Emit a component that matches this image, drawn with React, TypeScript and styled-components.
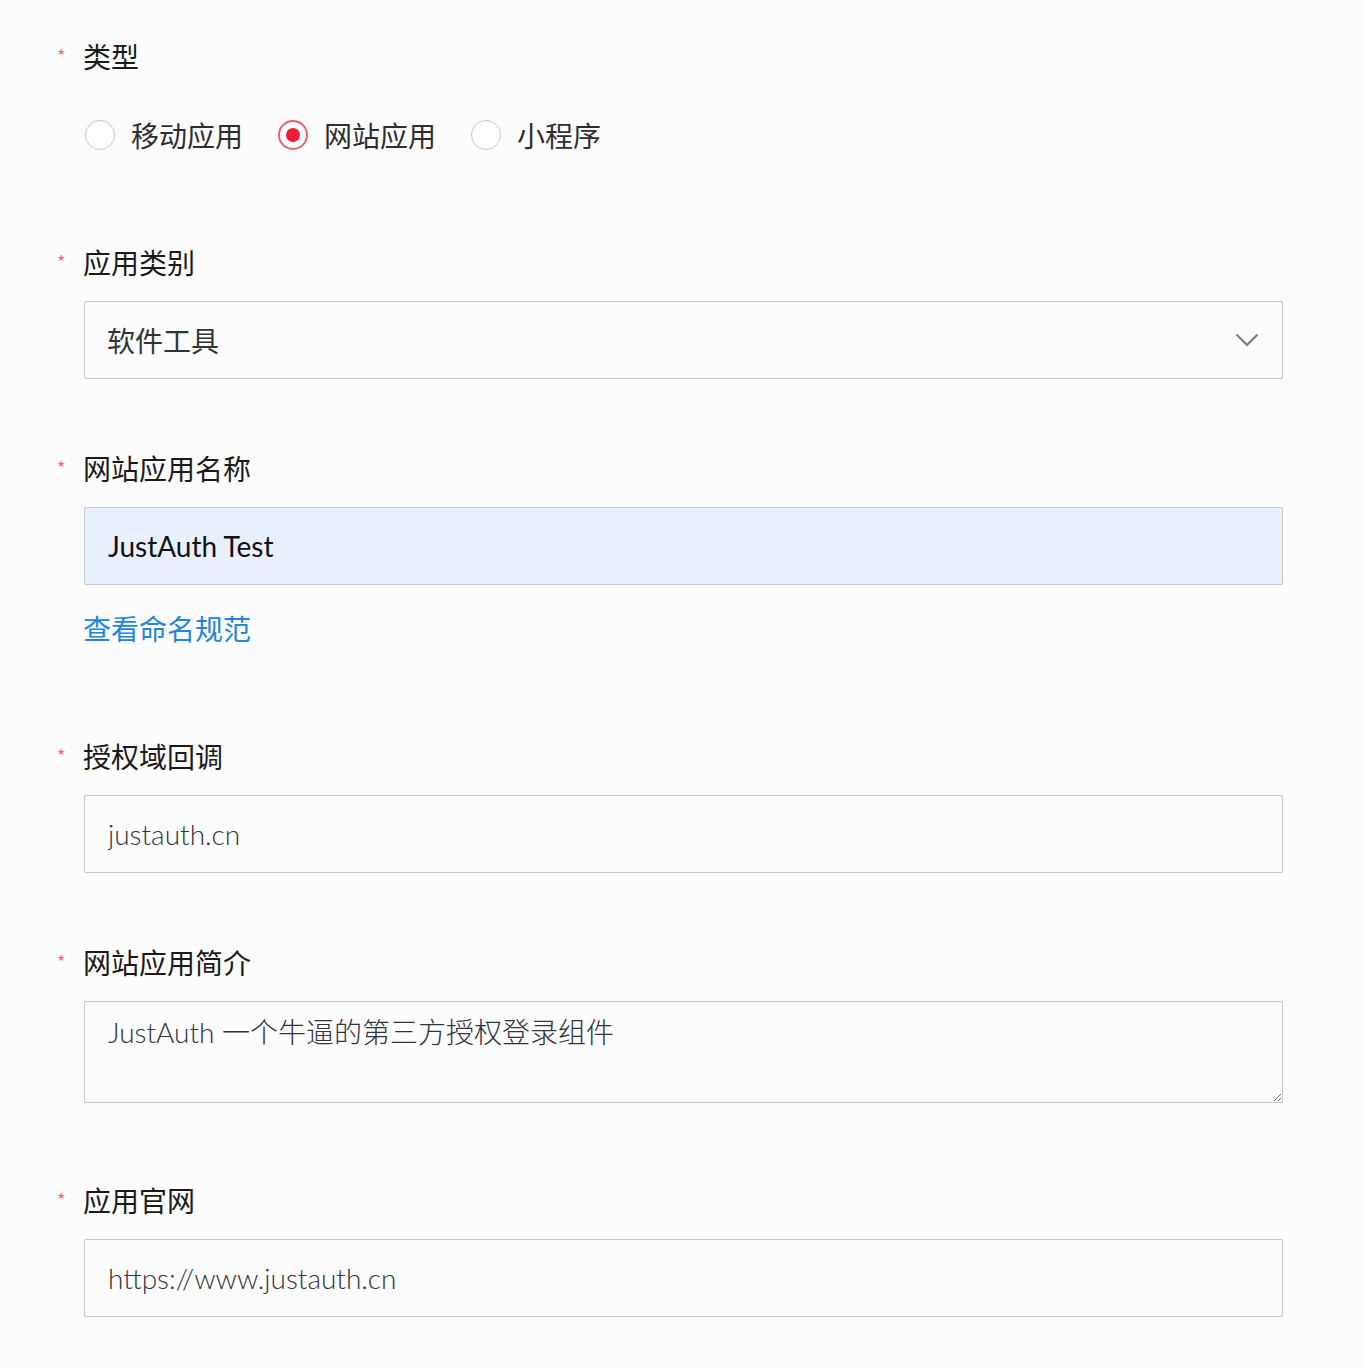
import React from "react";
import styled, { createGlobalStyle } from "styled-components";

const GlobalStyle = createGlobalStyle`
  html, body {
    margin: 0;
    padding: 0;
    background: #fcfcfd;
  }
  body {
    font-family: "Noto Sans CJK SC", "Noto Sans", sans-serif;
    color: #1c1c1c;
  }
  * { box-sizing: border-box; }
`;

const fieldFont = `"Lato", "Noto Sans CJK SC", "Noto Sans", sans-serif`;

const Page = styled.div`
  width: 1364px;
  min-height: 1368px;
  padding: 36px 0 0 56px;
  background: #fcfcfd;
`;

const FormItem = styled.section<{ $after: number }>`
  display: flex;
  flex-direction: column;
  margin-bottom: ${(p) => p.$after}px;
`;

const Label = styled.div`
  display: flex;
  align-items: center;
  height: 40px;
  font-size: 28px;
  line-height: 40px;
  color: #1a1a1a;
`;

const Required = styled.span`
  width: 27px;
  font-size: 18px;
  line-height: 1;
  color: #f26a74;
  padding-left: 1px;
  margin-top: -3px;
`;

const Control = styled.div<{ $top: number }>`
  margin-left: 28px;
  margin-top: ${(p) => p.$top}px;
  width: 1199px;
`;

const RadioGroup = styled.div`
  display: flex;
  align-items: center;
  gap: 35px;
  height: 40px;
  margin-left: 1px;
`;

const RadioItem = styled.label`
  display: flex;
  align-items: center;
  gap: 16px;
  font-size: 28px;
  color: #2e2e2e;
  cursor: pointer;
`;

const RadioCircle = styled.span<{ $checked?: boolean }>`
  width: 30px;
  height: 30px;
  border-radius: 50%;
  border: ${(p) => (p.$checked ? "2px solid #e4636c" : "1px solid #c9c9c9")};
  background: #fff;
  display: flex;
  align-items: center;
  justify-content: center;
  &::after {
    content: "";
    display: ${(p) => (p.$checked ? "block" : "none")};
    width: 14px;
    height: 14px;
    border-radius: 50%;
    background: #ee1c36;
  }
`;

const SelectBox = styled.div`
  height: 78px;
  border: 1px solid #c8c8c8;
  border-radius: 2px;
  background: #fcfcfd;
  display: flex;
  align-items: center;
  justify-content: space-between;
  padding: 0 23px 0 22px;
  font-size: 28px;
  color: #333;
`;

const Input = styled.input<{ $filled?: boolean; $strong?: boolean }>`
  display: block;
  width: 100%;
  height: 78px;
  border: 1px solid #c8c8c8;
  border-radius: 2px;
  background: ${(p) => (p.$filled ? "#e8f0fe" : "#fcfcfd")};
  padding: 0 23px;
  font-family: ${fieldFont};
  font-size: 28px;
  font-weight: ${(p) => (p.$strong ? 400 : 300)};
  color: ${(p) => (p.$strong ? "#111" : "#33333f")};
  outline: none;
`;

const TextArea = styled.textarea`
  display: block;
  width: 100%;
  height: 102px;
  border: 1px solid #c8c8c8;
  border-radius: 2px;
  background: #fcfcfd;
  padding: 12px 23px;
  font-family: ${fieldFont};
  font-size: 28px;
  font-weight: 300;
  line-height: 36px;
  color: #33333f;
  outline: none;
  resize: vertical;
`;

const Link = styled.a`
  display: block;
  height: 40px;
  line-height: 40px;
  font-size: 28px;
  color: #2385dd;
  text-decoration: none;
  margin-left: -1px;
`;

const Chevron = () => (
  <svg width="24" height="14" viewBox="0 0 24 14" fill="none">
    <path d="M1.5 1.5 L12 12 L22.5 1.5" stroke="#7a7a7a" strokeWidth="2" />
  </svg>
);

export default function App() {
  return (
    <>
      <GlobalStyle />
      <Page>
        <FormItem $after={87}>
          <Label>
            <Required>*</Required>类型
          </Label>
          <Control $top={39}>
            <RadioGroup>
              <RadioItem>
                <RadioCircle />
                移动应用
              </RadioItem>
              <RadioItem>
                <RadioCircle $checked />
                网站应用
              </RadioItem>
              <RadioItem>
                <RadioCircle />
                小程序
              </RadioItem>
            </RadioGroup>
          </Control>
        </FormItem>

        <FormItem $after={69}>
          <Label>
            <Required>*</Required>应用类别
          </Label>
          <Control $top={19}>
            <SelectBox>
              <span>软件工具</span>
              <Chevron />
            </SelectBox>
          </Control>
        </FormItem>

        <FormItem $after={88}>
          <Label>
            <Required>*</Required>网站应用名称
          </Label>
          <Control $top={19}>
            <Input $filled $strong defaultValue="JustAuth Test" />
          </Control>
          <Control $top={23}>
            <Link href="#">查看命名规范</Link>
          </Control>
        </FormItem>

        <FormItem $after={69}>
          <Label>
            <Required>*</Required>授权域回调
          </Label>
          <Control $top={19}>
            <Input defaultValue="justauth.cn" />
          </Control>
        </FormItem>

        <FormItem $after={77}>
          <Label>
            <Required>*</Required>网站应用简介
          </Label>
          <Control $top={19}>
            <TextArea defaultValue="JustAuth 一个牛逼的第三方授权登录组件" />
          </Control>
        </FormItem>

        <FormItem $after={0}>
          <Label>
            <Required>*</Required>应用官网
          </Label>
          <Control $top={19}>
            <Input defaultValue="https://www.justauth.cn" />
          </Control>
        </FormItem>
      </Page>
    </>
  );
}
